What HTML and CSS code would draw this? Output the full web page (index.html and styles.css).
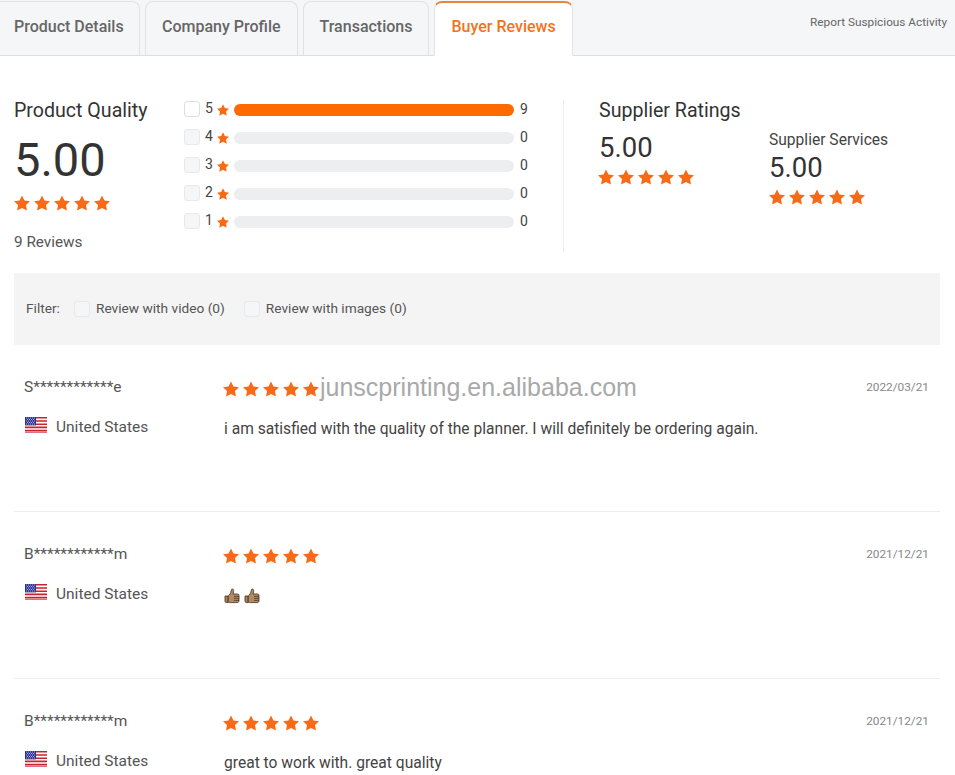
FILE: index.html
```html
<!DOCTYPE html>
<html>
<head>
<title>Buyer Reviews</title>
<link rel="stylesheet" href="styles.css">
</head>
<body>

<!-- shared icons -->
<svg class="defs" width="0" height="0">
  <symbol id="star" viewBox="0.49 0.5 19.02 18.09">
    <path d="M10 .5l2.94 5.95 6.57.96-4.75 4.64 1.12 6.54L10 15.5l-5.88 3.09 1.12-6.54L.49 7.41l6.57-.96z" fill="#f96a16"/>
  </symbol>
  <symbol id="flag" viewBox="0 0 22 16">
    <rect width="22" height="16" fill="#fff"/>
    <path d="M0 0h22v1.6H0zM0 3.2h22v1.6H0zM0 6.4h22V8H0zM0 9.6h22v1.6H0zM0 12.8h22v1.6H0z" fill="#c8222e"/>
    <rect y="14.8" width="22" height="1.2" fill="#d9757c"/>
    <rect width="11" height="8.4" fill="#2f338f"/>
    <path d="M1 1h1M3 1h1M5 1h1M7 1h1M9 1h1M2 2.5h1M4 2.5h1M6 2.5h1M8 2.5h1M1 4h1M3 4h1M5 4h1M7 4h1M9 4h1M2 5.5h1M4 5.5h1M6 5.5h1M8 5.5h1M1 7h1M3 7h1M5 7h1M7 7h1M9 7h1" stroke="#aeb3e6" stroke-width="1"/>
  </symbol>
  <symbol id="thumb" viewBox="0 0 16 16">
    <path d="M1 8h3.2v6.6H2.4C1.6 14.6 1 14 1 13.2z" fill="#a9825c" stroke="#3d2f22" stroke-width=".8"/>
    <path d="M4.2 8c1.6-1 2.6-3 3-5.4.2-1 .4-1.6 1.2-1.6 1 0 1.4 1 1.2 2.4L9.2 6h4.2c1 0 1.6.6 1.6 1.5v5.2c0 1.2-.8 1.9-2 1.9H6.4c-1 0-1.6-.4-2.2-.6z" fill="#b58a62" stroke="#3d2f22" stroke-width=".8"/>
    <path d="M10 8.4h5M10 10.4h5M10 12.4h5" stroke="#3d2f22" stroke-width=".7"/>
  </symbol>
</svg>

<div class="tabbar">
  <div class="tab tab-first">Product Details</div>
  <div class="tab">Company Profile</div>
  <div class="tab">Transactions</div>
  <div class="tab active">Buyer Reviews</div>
  <a class="report">Report Suspicious Activity</a>
</div>

<div class="content">
  <div class="overview">
    <div class="quality">
      <h3>Product Quality</h3>
      <div class="score-big">5.00</div>
      <div class="stars">
        <svg><use href="#star"/></svg><svg><use href="#star"/></svg><svg><use href="#star"/></svg><svg><use href="#star"/></svg><svg><use href="#star"/></svg>
      </div>
      <div class="count">9 Reviews</div>
    </div>

    <div class="breakdown">
      <div class="bar-row">
        <span class="check"></span><span class="num">5</span>
        <svg class="mini-star"><use href="#star"/></svg>
        <div class="bar"><div class="bar-fill" style="width: 100%"></div></div>
        <span class="total">9</span>
      </div>
      <div class="bar-row">
        <span class="check off"></span><span class="num">4</span>
        <svg class="mini-star"><use href="#star"/></svg>
        <div class="bar"><div class="bar-fill" style="width: 0%"></div></div>
        <span class="total">0</span>
      </div>
      <div class="bar-row">
        <span class="check off"></span><span class="num">3</span>
        <svg class="mini-star"><use href="#star"/></svg>
        <div class="bar"><div class="bar-fill" style="width: 0%"></div></div>
        <span class="total">0</span>
      </div>
      <div class="bar-row">
        <span class="check off"></span><span class="num">2</span>
        <svg class="mini-star"><use href="#star"/></svg>
        <div class="bar"><div class="bar-fill" style="width: 0%"></div></div>
        <span class="total">0</span>
      </div>
      <div class="bar-row">
        <span class="check off"></span><span class="num">1</span>
        <svg class="mini-star"><use href="#star"/></svg>
        <div class="bar"><div class="bar-fill" style="width: 0%"></div></div>
        <span class="total">0</span>
      </div>
    </div>

    <div class="supplier">
      <h3>Supplier Ratings</h3>
      <div class="supplier-cols">
        <div class="supplier-main">
          <div class="score">5.00</div>
          <div class="stars">
            <svg><use href="#star"/></svg><svg><use href="#star"/></svg><svg><use href="#star"/></svg><svg><use href="#star"/></svg><svg><use href="#star"/></svg>
          </div>
        </div>
        <div class="supplier-sub">
          <div class="sub-label">Supplier Services</div>
          <div class="score">5.00</div>
          <div class="stars">
            <svg><use href="#star"/></svg><svg><use href="#star"/></svg><svg><use href="#star"/></svg><svg><use href="#star"/></svg><svg><use href="#star"/></svg>
          </div>
        </div>
      </div>
    </div>
  </div>

  <div class="filter">
    <span class="filter-label">Filter:</span>
    <span class="check off"></span><span class="filter-text">Review with video (0)</span>
    <span class="check off second"></span><span class="filter-text">Review with images (0)</span>
  </div>

  <div class="review">
    <div class="buyer">
      <div class="buyer-name">S************e</div>
      <div class="buyer-country"><svg class="flag"><use href="#flag"/></svg>United States</div>
    </div>
    <div class="review-body">
      <div class="stars">
        <svg><use href="#star"/></svg><svg><use href="#star"/></svg><svg><use href="#star"/></svg><svg><use href="#star"/></svg><svg><use href="#star"/></svg>
      </div>
      <p>i am satisfied with the quality of the planner. I will definitely be ordering again.</p>
    </div>
    <div class="date">2022/03/21</div>
    <div class="watermark">junscprinting.en.alibaba.com</div>
  </div>

  <div class="review">
    <div class="buyer">
      <div class="buyer-name">B************m</div>
      <div class="buyer-country"><svg class="flag"><use href="#flag"/></svg>United States</div>
    </div>
    <div class="review-body">
      <div class="stars">
        <svg><use href="#star"/></svg><svg><use href="#star"/></svg><svg><use href="#star"/></svg><svg><use href="#star"/></svg><svg><use href="#star"/></svg>
      </div>
      <p class="thumbs"><svg><use href="#thumb"/></svg><svg><use href="#thumb"/></svg></p>
    </div>
    <div class="date">2021/12/21</div>
  </div>

  <div class="review last">
    <div class="buyer">
      <div class="buyer-name">B************m</div>
      <div class="buyer-country"><svg class="flag"><use href="#flag"/></svg>United States</div>
    </div>
    <div class="review-body">
      <div class="stars">
        <svg><use href="#star"/></svg><svg><use href="#star"/></svg><svg><use href="#star"/></svg><svg><use href="#star"/></svg><svg><use href="#star"/></svg>
      </div>
      <p>great to work with. great quality</p>
    </div>
    <div class="date">2021/12/21</div>
  </div>
</div>

</body>
</html>
```

FILE: styles.css
```css
/* Reset */
* {
  margin: 0;
  padding: 0;
  box-sizing: border-box;
}

body {
  font-family: 'Roboto', sans-serif;
  background-color: #fff;
  color: #333;
}

.defs {
  display: block;
}

/* Tabs */
.tabbar {
  display: flex;
  align-items: flex-end;
  gap: 5px;
  height: 56px;
  padding-top: 1px;
  background-color: #f5f6f8;
  border-bottom: 1px solid #dcdee0;
  position: relative;
}

.tab {
  height: 55px;
  margin-bottom: -1px;
  padding: 0 16px;
  line-height: 50px;
  font-size: 16px;
  font-weight: 500;
  color: #666;
  white-space: nowrap;
  background-color: #f5f6f8;
  border: 1px solid #e0e2e5;
  border-bottom: 1px solid #dcdee0;
  border-radius: 8px 8px 0 0;
}

.tab-first {
  width: 140px;
  padding-left: 14px;
  border-left: 0;
  border-top-left-radius: 0;
}

.tab.active {
  color: #f0741c;
  background-color: #fff;
  border-top: 2px solid #e8873c;
  border-bottom-color: #fff;
  line-height: 47px;
}

.report {
  position: absolute;
  right: 8px;
  top: 15px;
  font-size: 11.8px;
  color: #666;
}

/* Content */
.content {
  padding: 0 15px 0 14px;
}

.overview {
  display: flex;
  height: 217px;
  padding-top: 42px;
}

.quality {
  width: 170px;
}

h3 {
  font-size: 19.6px;
  font-weight: 400;
  line-height: 26px;
  color: #333;
}

.score-big {
  font-size: 47px;
  line-height: 56px;
  margin-top: 8px;
}

.stars {
  display: flex;
  gap: 4px;
  height: 16px;
}

.stars svg {
  width: 16px;
  height: 16px;
}

.quality .stars {
  margin-top: 7px;
}

.count {
  margin-top: 22px;
  font-size: 15.3px;
  line-height: 18px;
  color: #555;
}

/* Rating bars */
.breakdown {
  width: 379px;
  padding-top: 3px;
}

.bar-row {
  display: flex;
  align-items: center;
  height: 16px;
  margin-bottom: 12px;
  font-size: 14px;
  color: #444;
}

.check {
  display: inline-block;
  flex: none;
  width: 16px;
  height: 16px;
  background-color: #fff;
  border: 1px solid #dcdee0;
  border-radius: 3px;
}

.check.off {
  background-color: #f5f6f8;
  border-color: #e8e9eb;
}

.num {
  width: 12px;
  margin-left: 5px;
  margin-top: -2px;
}

.mini-star {
  width: 12px;
  height: 12px;
  margin-top: 2px;
  flex: none;
}

.bar {
  width: 280px;
  height: 12px;
  margin-left: 5px;
  margin-top: 2px;
  border-radius: 6px;
  background-color: #eceef0;
  flex: none;
}

.bar-fill {
  height: 100%;
  border-radius: 6px;
  background-color: #ff6a00;
}

.total {
  margin-left: 6px;
}

/* Supplier ratings */
.supplier {
  align-self: flex-start;
  height: 152px;
  margin-top: 2px;
  padding-left: 35px;
  border-left: 1px solid #eceef0;
  flex: 1;
}

.supplier h3 {
  line-height: 22px;
}

.supplier-cols {
  display: flex;
  padding-top: 9px;
}

.supplier-main {
  width: 170px;
}

.score {
  font-size: 27.5px;
  line-height: 34px;
}

.supplier .stars {
  margin-top: 4px;
}

.supplier-main .stars {
  margin-left: -1px;
}

.supplier-sub {
  margin-top: -1px;
}

.sub-label {
  font-size: 15.6px;
  line-height: 21px;
  color: #444;
}

/* Filter */
.filter {
  display: flex;
  align-items: center;
  height: 72px;
  padding-left: 12px;
  background-color: #f4f4f4;
  font-size: 13.7px;
  color: #555;
}

.filter-label {
  width: 48px;
  margin-top: -2px;
}

.filter-text {
  margin-left: 6px;
  margin-top: -2px;
}

.check.second {
  margin-left: 19px;
}

/* Review rows */
.review {
  display: flex;
  height: 167px;
  padding: 33px 11px 0 10px;
  border-bottom: 1px solid #eceef0;
  position: relative;
}

.review.last {
  height: 96px;
  border-bottom: 0;
}

.buyer {
  width: 199px;
}

.buyer-name {
  font-size: 15.5px;
  line-height: 18px;
  color: #555;
}

.buyer-country {
  display: flex;
  align-items: center;
  margin-top: 21px;
  font-size: 15.5px;
  line-height: 20px;
  color: #555;
}

.flag {
  width: 22px;
  height: 16px;
  margin: -4px 9px 0 1px;
}

.review-body {
  flex: 1;
  padding-top: 3px;
}

.review-body p {
  margin-top: 22px;
  margin-left: 1px;
  font-size: 15.6px;
  line-height: 20px;
  color: #444;
}

.review-body .thumbs {
  display: flex;
  gap: 4px;
  padding-top: 2px;
}

.thumbs svg {
  width: 16px;
  height: 16px;
}

.date {
  font-size: 11.8px;
  line-height: 18px;
  color: #888;
}

/* Watermark lies over the first review */
.watermark {
  position: absolute;
  left: 306px;
  top: 27px;
  font-family: 'Liberation Sans', sans-serif;
  font-size: 25px;
  line-height: 30px;
  color: #a9a9a9;
  text-shadow: 0 0 2px #fff;
}
```
